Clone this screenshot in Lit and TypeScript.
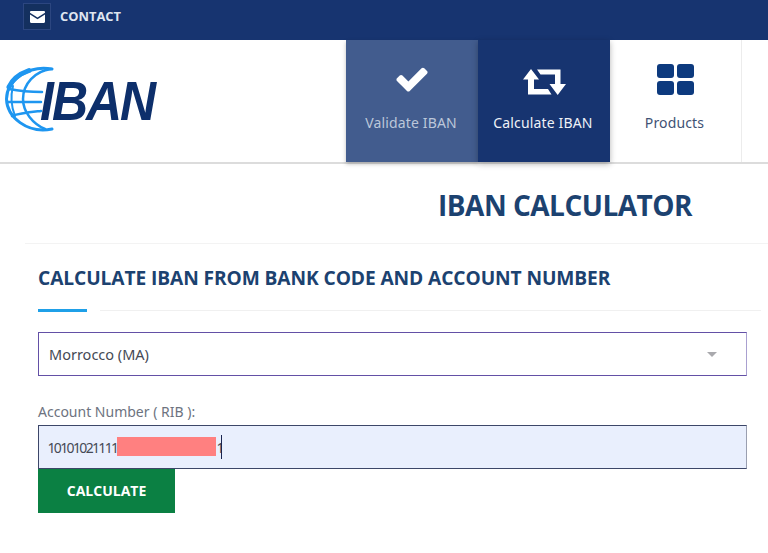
import { LitElement, html, css } from "lit";
import { customElement } from "lit/decorators.js";

@customElement("app-root")
export class AppRoot extends LitElement {
  static styles = css`
    :host { display: block; width: 768px; height: 553px; overflow: hidden; background: #fff; font-family: "Noto Sans", sans-serif; }
    .top { height: 40px; box-sizing: border-box; background: #173470; display: flex; align-items: flex-start; padding: 3px 0 0 23px; gap: 9px; }
    .mail { width: 28px; height: 27px; box-sizing: border-box; border: 1px solid #2c4680; background: #14305f; display: flex; align-items: center; justify-content: center; }
    .contact { font: 700 12.9px/27px "Open Sans", sans-serif; color: #dfe5f0; }
    .head { height: 124px; box-sizing: border-box; border-bottom: 2px solid #dcdcdc; display: flex; justify-content: space-between; }
    .logo { display: flex; align-items: center; padding: 0 0 2px 5px; }
    .globe { width: 50px; height: 68px; margin-right: -15px; }
    .word { font: italic 700 50px/1 "Liberation Sans", sans-serif; color: #0d2f6b; letter-spacing: -2px; transform: scaleY(1.12); margin-top: 1px; }
    nav { display: flex; padding-right: 26px; height: 122px; }
    .item { width: 132px; height: 122px; box-sizing: border-box; display: flex; flex-direction: column; align-items: center; font-size: 14px; letter-spacing: .15px; color: #3f5274; }
    .ic { height: 67px; display: flex; align-items: flex-end; justify-content: center; margin-bottom: 6px; }
    .ic svg { display: block; }
    .check { margin-bottom: 10px; }
    .retweet { margin-bottom: 11px; }
    .grid { margin-bottom: 12px; }
    .lb { line-height: 20px; margin-left: -2px; }
    .v { background: #425c8e; color: #bcc7da; box-shadow: 0 2px 4px rgba(0,0,0,.25); }
    .c { background: #173470; color: #eef1f7; box-shadow: 0 2px 6px rgba(0,0,0,.3); }
    .p { border-right: 1px solid #ececec; }
    main { padding: 0 21px 0 38px; }
    h1 { margin: 0 0 0 400px; padding-top: 23px; height: 56px; font: 700 28px/36px "Open Sans", sans-serif; color: #1c4270; letter-spacing: -.5px; white-space: nowrap; }
    .rule { height: 1px; background: #f3f3f3; margin: 0 -21px 0 -13px; }
    h2 { margin: 21px 0 0; font: 700 19.2px/26px "Open Sans", sans-serif; color: #1c4270; letter-spacing: -.1px; white-space: nowrap; }
    .under { display: flex; align-items: center; gap: 13px; margin: 18px -14px 20px 0; height: 3px; }
    .under i { display: block; width: 49px; height: 3px; background: #1fa0e8; }
    .under b { display: block; flex: 1; height: 1px; background: #f0f0f0; }
    .field { box-sizing: border-box; height: 44px; display: flex; align-items: center; padding: 0 10px; font-size: 14.5px; color: #454a55; }
    .sel { border: 1px solid #6350a6; border-right-color: #a9a0d0; justify-content: space-between; padding-right: 29px; }
    .tri { width: 0; height: 0; border-left: 5px solid transparent; border-right: 5px solid transparent; border-top: 5px solid #a9a9ad; }
    label { display: block; margin-top: 27px; font-size: 14px; line-height: 18px; color: #6d7380; margin-bottom: 4px; }
    .inp { border: 1px solid #3c4668; border-right-color: #9a9fb0; background: #e9effd; font-size: 14px; letter-spacing: -1.65px; padding-left: 8.5px; }
    .mask { display: inline-block; width: 99px; height: 19px; background: #ff8080; margin-top: -1px; }
    .caret { display: inline-block; width: 1.5px; height: 24px; background: #1a2450; margin-left: -2px; }
    button { display: block; border: 0; width: 137px; height: 44px; background: #0b8043; color: #fff; font: 700 14px "Open Sans", sans-serif; padding: 0 0 2px; }
  `;

  render() {
    return html`
      <div class="top">
        <span class="mail">
          <svg width="15" height="12" viewBox="0 0 15 12"><path fill="#fff" d="M0 1.2C0 .5.5 0 1.2 0h12.600c.7 0 1.200.5 1.200 1.200v.6L7.500 6.600 0 1.800zM0 3.400l7.500 4.800L15 3.400v7.400c0 .7-.5 1.200-1.200 1.200H1.200C.5 12 0 11.500 0 10.800z"/></svg>
        </span>
        <span class="contact">CONTACT</span>
      </div>
      <header class="head">
        <div class="logo">
          <svg class="globe" viewBox="0 0 50 68" fill="none" stroke="#1e96f0" stroke-linecap="round">
            <path stroke-width="3" d="M47 3C24 -1 2 13 1.500 33C2 51 22 68 47 63"/>
            <path stroke-width="5" d="M4 21C7 14 14 8 24 4.500"/>
            <path stroke-width="2.500" d="M46 3C30 5 18 18 18 33C18 46 28 58 40 63"/>
            <path stroke-width="2.500" d="M4 23C14 25 28 26 37 26M3 36H36M7 50C15 47 27 46 36 45"/>
            <path stroke-width="2" d="M8 20C6 28 6 40 10 50"/>
          </svg>
          <span class="word">IBAN</span>
        </div>
        <nav>
          <div class="item v">
            <div class="ic">
              <svg class="check" width="36" height="36" viewBox="0 0 1792 1792"><path fill="#fff" d="M1671 566q0 40-28 68l-724 724-136 136q-28 28-68 28t-68-28l-136-136-362-362q-28-28-28-68t28-68l136-136q28-28 68-28t68 28l294 295 656-657q28-28 68-28t68 28l136 136q28 28 28 68z"/></svg>
            </div>
            <span class="lb">Validate IBAN</span>
          </div>
          <div class="item c">
            <div class="ic">
              <svg class="retweet" width="43" height="27" viewBox="0 0 43 27"><path fill="#fff" d="M8 0 16 10.500H11V20H25L28.500 25.500H5V10.500H0ZM14 .5H37.500V15H43L34.700 26 26.500 15H32V5.500H17.500Z"/></svg>
            </div>
            <span class="lb">Calculate IBAN</span>
          </div>
          <div class="item p">
            <div class="ic">
              <svg class="grid" width="37" height="31" viewBox="0 0 37 31"><g fill="#0d3a7e"><rect width="17" height="14" rx="3"/><rect x="20" width="17" height="14" rx="3"/><rect y="17" width="17" height="14" rx="3"/><rect x="20" y="17" width="17" height="14" rx="3"/></g></svg>
            </div>
            <span class="lb">Products</span>
          </div>
        </nav>
      </header>
      <main>
        <h1>IBAN CALCULATOR</h1>
        <div class="rule"></div>
        <h2>CALCULATE IBAN FROM BANK CODE AND ACCOUNT NUMBER</h2>
        <div class="under"><i></i><b></b></div>
        <div class="field sel"><span>Morrocco (MA)</span><span class="tri"></span></div>
        <label>Account Number ( RIB ):</label>
        <div class="field inp">10101021111<span class="mask"></span>1<span class="caret"></span></div>
        <button>CALCULATE</button>
      </main>
    `;
  }
}
